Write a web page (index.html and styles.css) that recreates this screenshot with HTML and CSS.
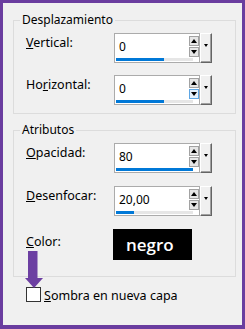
FILE: index.html
```html
<!DOCTYPE html>
<html lang="es">
<head>
    <meta charset="UTF-8">
    <meta name="viewport" content="width=245">
    <title>Sombra</title>
    <link rel="stylesheet" href="styles.css">
</head>
<body>
    <div class="frame">
        <fieldset class="group group-offset">
            <legend>Desplazamiento</legend>
            <div class="field">
                <span class="field-label"><u>V</u>ertical:</span>
                <div class="spin">
                    <div class="spin-box">
                        <div class="spin-top">
                            <span class="spin-value">0</span>
                            <div class="spin-arrows">
                                <span class="arrow-btn up"></span>
                                <span class="arrow-btn down"></span>
                            </div>
                        </div>
                        <div class="track"><div class="track-fill" style="width: 48px"></div></div>
                    </div>
                    <span class="drop-btn"></span>
                </div>
            </div>
            <div class="field">
                <span class="field-label">Ho<u>r</u>izontal:</span>
                <div class="spin">
                    <div class="spin-box">
                        <div class="spin-top">
                            <span class="spin-value">0</span>
                            <div class="spin-arrows">
                                <span class="arrow-btn up"></span>
                                <span class="arrow-btn down hover"></span>
                            </div>
                        </div>
                        <div class="track"><div class="track-fill" style="width: 48px"></div></div>
                    </div>
                    <span class="drop-btn"></span>
                </div>
            </div>
        </fieldset>

        <fieldset class="group group-attr">
            <legend>Atributos</legend>
            <div class="field">
                <span class="field-label"><u>O</u>pacidad:</span>
                <div class="spin">
                    <div class="spin-box">
                        <div class="spin-top">
                            <span class="spin-value">80</span>
                            <div class="spin-arrows">
                                <span class="arrow-btn up"></span>
                                <span class="arrow-btn down"></span>
                            </div>
                        </div>
                        <div class="track"><div class="track-fill" style="width: 77px"></div></div>
                    </div>
                    <span class="drop-btn"></span>
                </div>
            </div>
            <div class="field">
                <span class="field-label"><u>D</u>esenfocar:</span>
                <div class="spin">
                    <div class="spin-box">
                        <div class="spin-top">
                            <span class="spin-value">20,00</span>
                            <div class="spin-arrows">
                                <span class="arrow-btn up"></span>
                                <span class="arrow-btn down"></span>
                            </div>
                        </div>
                        <div class="track"><div class="track-fill" style="width: 18px"></div></div>
                    </div>
                    <span class="drop-btn"></span>
                </div>
            </div>
            <div class="field field-color">
                <span class="field-label"><u>C</u>olor:</span>
                <div class="swatch">negro</div>
            </div>
        </fieldset>

        <label class="check">
            <span class="check-box"></span>
            <span class="check-text"><u>S</u>ombra en nueva capa</span>
        </label>

        <svg class="pointer" width="18" height="38" viewBox="0 0 18 38">
            <rect x="3" y="0" width="9.5" height="28" fill="#6c3fa2"/>
            <polygon points="0,27 18,27 9,37" fill="#6c3fa2"/>
        </svg>
    </div>
</body>
</html>
```

FILE: styles.css
```css
body {
    margin: 0;
    padding: 0;
    font-family: 'Noto Sans', 'DejaVu Sans', sans-serif;
    font-size: 12px;
    color: #000;
}
.frame {
    position: relative;
    width: 245px;
    height: 329px;
    box-sizing: border-box;
    border: 3px solid #6a3d9f;
    border-bottom-width: 4px;
    background: #f0f0f0;
    padding: 9px 0 0 10px;
}
.group {
    width: 223px;
    box-sizing: border-box;
    margin: 0;
    border: 1px solid #dcdcdc;
    padding: 5px 0 8px 6px;
}
.group legend {
    padding: 0 2px;
    line-height: 16px;
}
.group-attr {
    margin-top: 8px;
    padding-bottom: 16px;
}
.field {
    display: flex;
    align-items: flex-start;
    padding-left: 6px;
}
.field + .field {
    margin-top: 12px;
}
.group-attr .field + .field {
    margin-top: 13px;
}
.field-label {
    width: 88px;
    flex-shrink: 0;
    padding-top: 2px;
    font-size: 12.5px;
    line-height: 16px;
}
.spin {
    display: flex;
}
.spin-box {
    width: 86px;
    height: 30px;
    box-sizing: border-box;
    border: 1px solid #ababab;
    background: #fff;
    padding: 2px 0 1px 1px;
    display: flex;
    flex-direction: column;
}
.spin-top {
    display: flex;
    height: 21px;
}
.spin-value {
    flex: 1;
    padding-left: 3px;
    line-height: 22px;
}
.spin-arrows {
    width: 10px;
    display: flex;
    flex-direction: column;
    gap: 1px;
}
.arrow-btn {
    height: 10px;
    box-sizing: border-box;
    border: 1px solid #a2a2a2;
    background: #e6e6e6;
    display: flex;
    align-items: center;
    justify-content: center;
}
.arrow-btn::after {
    content: "";
    border-left: 3px solid transparent;
    border-right: 3px solid transparent;
}
.arrow-btn.up::after {
    border-bottom: 4px solid #000;
}
.arrow-btn.down::after {
    border-top: 4px solid #000;
}
.arrow-btn.hover {
    border-color: #5ea6e4;
    background: #e5f1fb;
}
.track {
    margin-top: 1px;
    width: 77px;
    height: 3px;
    background: #e6e6e6;
}
.track-fill {
    height: 3px;
    background: #0078d7;
}
.drop-btn {
    width: 12px;
    height: 30px;
    box-sizing: border-box;
    border: 1px solid;
    border-color: #fff #646464 #646464 #fff;
    box-shadow: inset -1px -1px #a0a0a0;
    background: #f0f0f0;
    display: flex;
    justify-content: center;
    padding-top: 10px;
}
.drop-btn::after {
    content: "";
    height: 0;
    border-left: 2.5px solid transparent;
    border-right: 2.5px solid transparent;
    border-top: 3px solid #000;
}
.field-color .field-label {
    padding-top: 5px;
}
.swatch {
    width: 79px;
    height: 31px;
    box-sizing: border-box;
    margin-left: -1px;
    padding-left: 13px;
    background: #000;
    color: #fff;
    font-family: 'Open Sans', 'Noto Sans', sans-serif;
    font-size: 17px;
    font-weight: 600;
    line-height: 32px;
}
.check {
    display: flex;
    align-items: flex-start;
    gap: 3px;
    margin-top: 10px;
    padding-left: 13px;
}
.check-box {
    width: 15px;
    height: 15px;
    box-sizing: border-box;
    border: 1px solid #333;
    background: #fff;
}
.check-text {
    font-size: 12.5px;
    line-height: 16px;
    padding-top: 1px;
}
.pointer {
    position: absolute;
    left: 22px;
    top: 248px;
}
```
